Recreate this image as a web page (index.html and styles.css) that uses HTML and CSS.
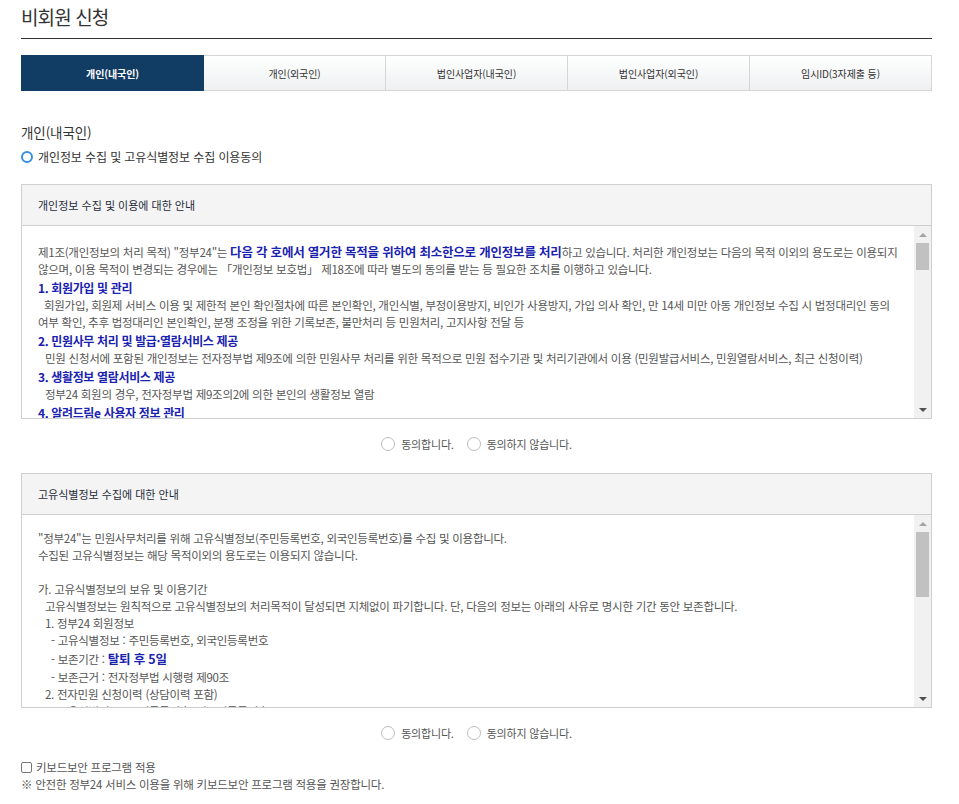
FILE: index.html
```html
<!DOCTYPE html>
<html lang="ko">
<head>
<meta charset="utf-8">
<title>비회원 신청</title>
<link rel="stylesheet" href="styles.css">
</head>
<body>
<div class="page">
  <h1 class="title">비회원 신청</h1>

  <ul class="tabs">
    <li class="tab active">개인(내국인)</li>
    <li class="tab">개인(외국인)</li>
    <li class="tab">법인사업자(내국인)</li>
    <li class="tab">법인사업자(외국인)</li>
    <li class="tab">임시ID(3자제출 등)</li>
  </ul>

  <h2 class="section-title">개인(내국인)</h2>
  <h3 class="agree-title">개인정보 수집 및 고유식별정보 수집 이용동의</h3>

  <div class="terms">
    <div class="terms-head">개인정보 수집 및 이용에 대한 안내</div>
    <div class="terms-body">
      <div class="terms-text">
        <p>제1조(개인정보의 처리 목적) "정부24"는 <strong class="hl">다음 각 호에서 열거한 목적을 위하여 최소한으로 개인정보를 처리</strong>하고 있습니다. 처리한 개인정보는 다음의 목적 이외의 용도로는 이용되지<br>않으며, 이용 목적이 변경되는 경우에는 「개인정보 보호법」 제18조에 따라 별도의 동의를 받는 등 필요한 조치를 이행하고 있습니다.</p>
        <h4 class="terms-h">1. 회원가입 및 관리</h4>
        <p><span class="i1">회원가입, 회원제 서비스 이용 및 제한적 본인 확인절차에 따른 본인확인, 개인식별, 부정이용방지, 비인가 사용방지, 가입 의사 확인, 만 14세 미만 아동 개인정보 수집 시 법정대리인 동의</span><br>여부 확인, 추후 법정대리인 본인확인, 분쟁 조정을 위한 기록보존, 불만처리 등 민원처리, 고지사항 전달 등</p>
        <h4 class="terms-h">2. 민원사무 처리 및 발급·열람서비스 제공</h4>
        <p class="i1">민원 신청서에 포함된 개인정보는 전자정부법 제9조에 의한 민원사무 처리를 위한 목적으로 민원 접수기관 및 처리기관에서 이용 (민원발급서비스, 민원열람서비스, 최근 신청이력)</p>
        <h4 class="terms-h">3. 생활정보 열람서비스 제공</h4>
        <p class="i1">정부24 회원의 경우, 전자정부법 제9조의2에 의한 본인의 생활정보 열람</p>
        <h4 class="terms-h">4. 알려드림e 사용자 정보 관리</h4>
      </div>
      <div class="scrollbar">
        <span class="sb-btn sb-up"></span>
        <span class="sb-track"><span class="sb-thumb thumb-short"></span></span>
        <span class="sb-btn sb-down"></span>
      </div>
    </div>
  </div>

  <div class="agree-choice">
    <label><input type="radio" name="agree1">동의합니다.</label>
    <label><input type="radio" name="agree1">동의하지 않습니다.</label>
  </div>

  <div class="terms terms-second">
    <div class="terms-head">고유식별정보 수집에 대한 안내</div>
    <div class="terms-body">
      <div class="terms-text text-second">
        <p>"정부24"는 민원사무처리를 위해 고유식별정보(주민등록번호, 외국인등록번호)를 수집 및 이용합니다.<br>수집된 고유식별정보는 해당 목적이외의 용도로는 이용되지 않습니다.</p>
        <p class="blank">&nbsp;</p>
        <p>가. 고유식별정보의 보유 및 이용기간</p>
        <p class="i1">고유식별정보는 원칙적으로 고유식별정보의 처리목적이 달성되면 지체없이 파기합니다. 단, 다음의 정보는 아래의 사유로 명시한 기간 동안 보존합니다.</p>
        <p class="i1">1. 정부24 회원정보</p>
        <p class="i2">- 고유식별정보 : 주민등록번호, 외국인등록번호</p>
        <p class="i2 tall">- 보존기간 : <strong class="hl">탈퇴 후 5일</strong></p>
        <p class="i2">- 보존근거 : 전자정부법 시행령 제90조</p>
        <p class="i1">2. 전자민원 신청이력 (상담이력 포함)</p>
        <p class="i2">- 고유식별정보 : 주민등록번호, 외국인등록번호</p>
      </div>
      <div class="scrollbar">
        <span class="sb-btn sb-up"></span>
        <span class="sb-track"><span class="sb-thumb thumb-long"></span></span>
        <span class="sb-btn sb-down"></span>
      </div>
    </div>
  </div>

  <div class="agree-choice">
    <label><input type="radio" name="agree2">동의합니다.</label>
    <label><input type="radio" name="agree2">동의하지 않습니다.</label>
  </div>

  <div class="keyboard">
    <label class="kb-check"><input type="checkbox">키보드보안 프로그램 적용</label>
    <p class="kb-note">※ 안전한 정부24 서비스 이용을 위해 키보드보안 프로그램 적용을 권장합니다.</p>
  </div>
</div>
</body>
</html>
```
FILE: styles.css
```css
* { box-sizing: border-box; }
html, body { margin: 0; padding: 0; background: #fff; }
body {
  font-family: "Noto Sans CJK KR", "Noto Sans", sans-serif;
  color: #333;
}
.page { width: 911px; margin-left: 21px; }

.title {
  margin: 0;
  padding: 5px 0 9px;
  font-size: 19px;
  line-height: 24px;
  font-weight: normal;
  letter-spacing: -0.9px;
  color: #333;
  border-bottom: 1px solid #333;
}

.tabs {
  display: flex;
  list-style: none;
  margin: 16px 0 0;
  padding: 0;
  height: 36px;
}
.tab {
  flex: 1;
  display: flex;
  align-items: center;
  justify-content: center;
  margin-left: -1px;
  border: 1px solid #d6d6d6;
  background: linear-gradient(#ffffff, #eef0f1);
  font-size: 10px;
  letter-spacing: -0.1px;
  color: #333;
}
.tab:first-child { margin-left: 0; }
.tab.active {
  position: relative;
  z-index: 1;
  background: #113c64;
  border-color: #113c64;
  color: #fff;
  font-weight: bold;
}

.section-title {
  margin: 31px 0 0;
  font-size: 13.5px;
  line-height: 20px;
  font-weight: normal;
  letter-spacing: -0.1px;
  color: #333;
}
.agree-title {
  margin: 6px 0 0;
  display: flex;
  align-items: center;
  gap: 5px;
  font-size: 12px;
  line-height: 18px;
  font-weight: normal;
  letter-spacing: -0.1px;
  color: #333;
}
.agree-title::before {
  content: "";
  flex: none;
  width: 8px;
  height: 8px;
  border: 2.5px solid #3a8ee0;
  border-radius: 50%;
}

.terms {
  margin-top: 18px;
  border: 1px solid #cfcfcf;
}
.terms-second { margin-top: 19px; }
.terms-head {
  height: 41px;
  line-height: 40px;
  padding-left: 16px;
  background: #f4f4f4;
  border-bottom: 1px solid #cfcfcf;
  font-size: 11px;
  letter-spacing: 0;
  color: #1f2b3a;
}
.terms-body {
  display: flex;
  height: 192px;
  overflow: hidden;
}
.terms-text {
  flex: 1;
  min-width: 0;
  overflow: hidden;
  padding: 17px 0 0 16px;
  font-size: 11.5px;
  line-height: 17px;
  letter-spacing: -0.27px;
  color: #555;
  white-space: nowrap;
}
.text-second { padding-top: 15px; }
.terms-text p { margin: 0; }
.terms-h {
  margin: 0;
  font-size: 12px;
  line-height: 19px;
  font-weight: bold;
  letter-spacing: -0.35px;
  color: #1a22b0;
}
.hl {
  font-size: 12.5px;
  font-weight: bold;
  letter-spacing: -0.2px;
  color: #1a22b0;
}
.i1 { padding-left: 7px; }
span.i1 { padding-left: 6px; }
.i2 { padding-left: 13px; }
.terms-text p.tall { line-height: 19px; }

.scrollbar {
  flex: none;
  width: 17px;
  display: flex;
  flex-direction: column;
  background: #f1f1f1;
}
.sb-btn {
  flex: none;
  height: 17px;
  display: flex;
  align-items: center;
  justify-content: center;
}
.sb-up::before {
  content: "";
  border-left: 4px solid transparent;
  border-right: 4px solid transparent;
  border-bottom: 4px solid #a3a3a3;
}
.sb-down::before {
  content: "";
  border-left: 4px solid transparent;
  border-right: 4px solid transparent;
  border-top: 4px solid #505050;
}
.sb-track {
  flex: 1;
  padding: 0 2px;
}
.sb-thumb {
  display: block;
  background: #c1c1c1;
}
.thumb-short { height: 27px; }
.thumb-long { height: 65px; }

.agree-choice {
  margin-top: 15px;
  height: 20px;
  display: flex;
  justify-content: center;
  align-items: center;
  font-size: 11px;
  letter-spacing: -0.2px;
  color: #555;
}
.agree-choice label {
  display: flex;
  align-items: center;
  gap: 6px;
}
.agree-choice label + label { margin-left: 13px; }
.agree-choice input {
  appearance: none;
  -webkit-appearance: none;
  width: 14px;
  height: 14px;
  margin: 0;
  border: 1px solid #bdbdbd;
  border-radius: 50%;
  background: #fff;
}

.keyboard {
  margin-top: 16px;
  font-size: 11.5px;
  letter-spacing: -0.25px;
  color: #555;
}
.kb-check {
  display: flex;
  align-items: center;
  gap: 4px;
  line-height: 17px;
}
.kb-check input {
  appearance: none;
  -webkit-appearance: none;
  width: 11px;
  height: 11px;
  margin: 0;
  border: 1px solid #767676;
  border-radius: 2px;
  background: #fff;
}
.kb-note { margin: 0; line-height: 16px; }
```
